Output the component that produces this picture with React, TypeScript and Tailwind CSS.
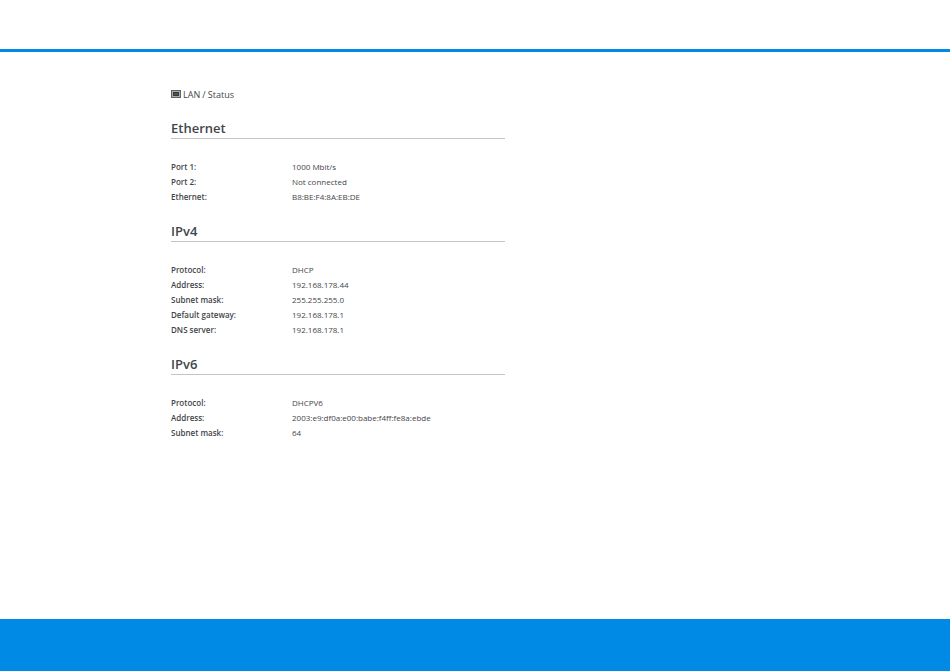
interface Row {
  label: string;
  value: string;
}

interface Section {
  title: string;
  rows: Row[];
}

const sections: Section[] = [
  {
    title: 'Ethernet',
    rows: [
      { label: 'Port 1:', value: '1000 Mbit/s' },
      { label: 'Port 2:', value: 'Not connected' },
      { label: 'Ethernet:', value: 'B8:BE:F4:8A:EB:DE' },
    ],
  },
  {
    title: 'IPv4',
    rows: [
      { label: 'Protocol:', value: 'DHCP' },
      { label: 'Address:', value: '192.168.178.44' },
      { label: 'Subnet mask:', value: '255.255.255.0' },
      { label: 'Default gateway:', value: '192.168.178.1' },
      { label: 'DNS server:', value: '192.168.178.1' },
    ],
  },
  {
    title: 'IPv6',
    rows: [
      { label: 'Protocol:', value: 'DHCPV6' },
      { label: 'Address:', value: '2003:e9:df0a:e00:babe:f4ff:fe8a:ebde' },
      { label: 'Subnet mask:', value: '64' },
    ],
  },
];

function LanIcon() {
  return (
    <svg viewBox="0 0 10 8" className="mb-px h-[8px] w-[10px]" aria-hidden="true">
      <rect width="10" height="8" fill="#5d6265" />
      <rect x="1" y="1" width="8" height="6" fill="#a9adaf" />
      <rect x="2" y="2" width="6" height="4" fill="#34393c" />
      <rect x="3" y="3" width="4" height="2" fill="#4b5053" />
    </svg>
  );
}

function StatusSection({ title, rows }: Section) {
  return (
    <section>
      <h2 className="border-b border-[#c4c4c4] text-[13px] leading-5 font-semibold">{title}</h2>
      <table className="mt-5 w-full text-left">
        <tbody>
          {rows.map((row) => (
            <tr key={row.label}>
              <th scope="row" className="w-[121px] p-0 font-semibold">{row.label}</th>
              <td className="p-0">{row.value}</td>
            </tr>
          ))}
        </tbody>
      </table>
    </section>
  );
}

export default function App() {
  return (
    <div className="flex min-h-screen flex-col bg-white font-['Open_Sans',sans-serif] text-[8px] leading-[15px] text-[#3f464a]">
      <header className="h-[52px] border-b-3 border-[#008ae6]" />
      <main className="w-full flex-1 px-[18%] pt-[35px]">
        <nav aria-label="Breadcrumb" className="flex items-center gap-[2px] text-[9px]">
          <LanIcon />
          <a href="#lan">LAN</a>
          <span>/ Status</span>
        </nav>
        <div className="mt-4 flex max-w-[334px] flex-col gap-[17px]">
          {sections.map((section) => (
            <StatusSection key={section.title} {...section} />
          ))}
        </div>
      </main>
      <footer className="h-[52px] bg-[#008ae6]" />
    </div>
  );
}
